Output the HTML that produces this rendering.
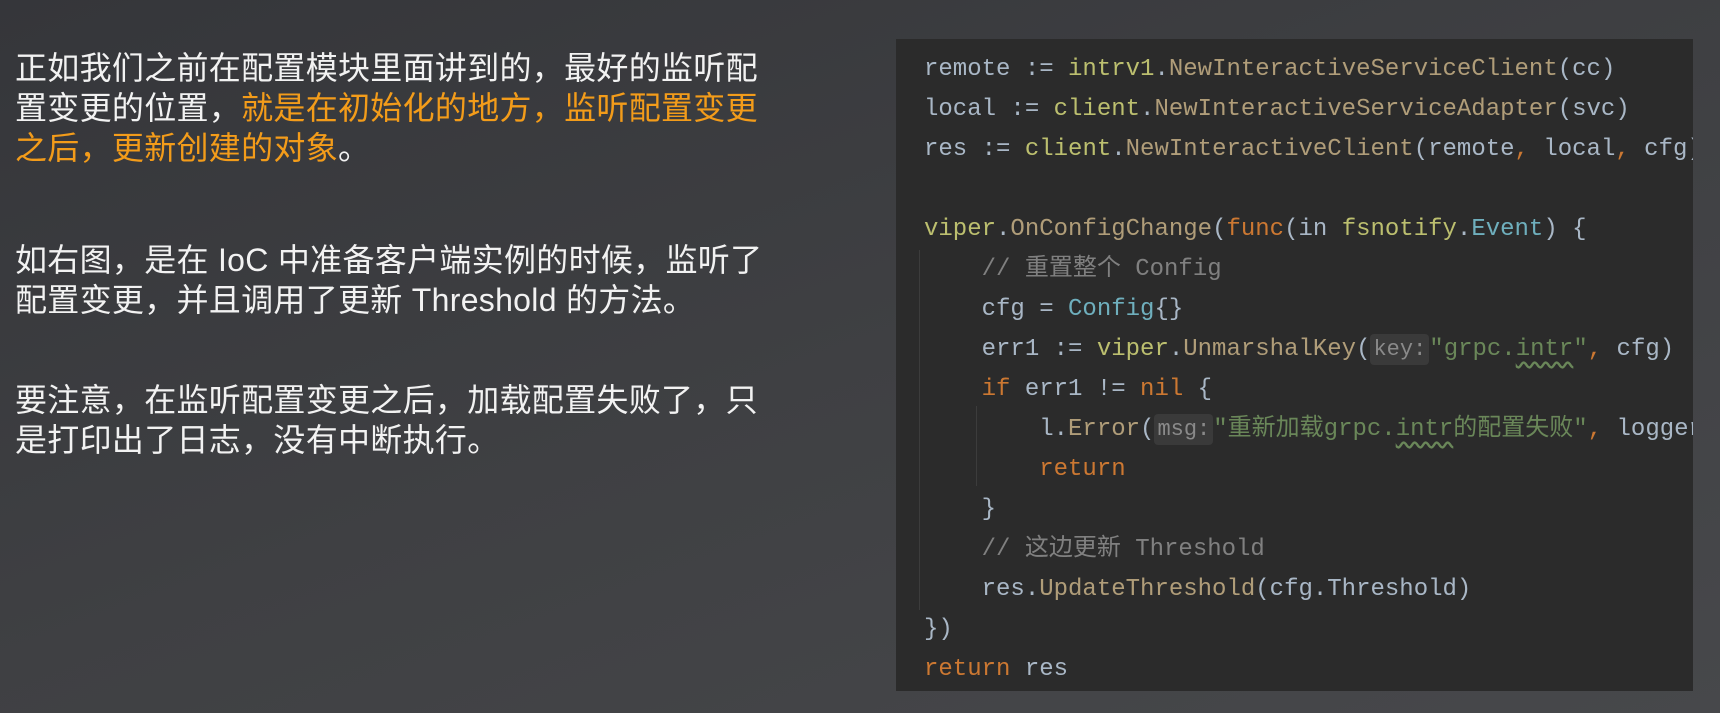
<!DOCTYPE html>
<html><head><meta charset="utf-8"><style>
*{margin:0;padding:0;box-sizing:border-box}
body{width:1720px;height:713px;overflow:hidden;background:linear-gradient(160deg,#35363a 0%,#3f4043 50%,#47484b 100%);position:relative;font-family:"Liberation Sans","Noto Sans CJK SC",sans-serif}
.t{position:absolute;left:15px;color:#f2f2f2;font-size:32px;line-height:40px;white-space:nowrap;letter-spacing:0.3px}
.o{color:#f39c1a}
.code{position:absolute;left:896px;top:39px;width:797px;height:652px;background:#2b2b2b;overflow:hidden}
.code pre{position:absolute;left:28px;top:11px;font-family:"Liberation Mono","Noto Sans CJK SC",monospace;font-size:24px;line-height:40px;color:#a9b7c6;white-space:pre}
.p{color:#bcbf6f}.f{color:#b09d79}.k{color:#cc7832}.s{color:#6a8759}.c{color:#808080}.ty{color:#6fafbd}
.h{background:#3a3a3a;color:#8a8a8a;border-radius:4px;padding:3px 3px;font-size:22px}
.w{text-decoration:underline wavy #6a8759;text-underline-offset:6px}
.g{position:absolute;width:1px;background:#3c3c3c}
</style></head><body>
<div class="t" style="top:48px">正如我们之前在配置模块里面讲到的，最好的监听配</div>
<div class="t" style="top:88px">置变更的位置，<span class="o">就是在初始化的地方，监听配置变更</span></div>
<div class="t o" style="top:128px">之后，更新创建的对象<span style="color:#f2f2f2">。</span></div>
<div class="t" style="top:240px">如右图，是在 IoC 中准备客户端实例的时候，监听了</div>
<div class="t" style="top:280px">配置变更，并且调用了更新 Threshold 的方法。</div>
<div class="t" style="top:380px">要注意，在监听配置变更之后，加载配置失败了，只</div>
<div class="t" style="top:420px">是打印出了日志，没有中断执行。</div>
<div class="code">
<div class="g" style="left:23px;top:211px;height:360px"></div>
<div class="g" style="left:80px;top:367px;height:80px"></div>
<pre>remote := <span class="p">intrv1</span>.<span class="f">NewInteractiveServiceClient</span>(cc)
local := <span class="p">client</span>.<span class="f">NewInteractiveServiceAdapter</span>(svc)
res := <span class="p">client</span>.<span class="f">NewInteractiveClient</span>(remote<span class="k">,</span> local<span class="k">,</span> cfg)

<span class="p">viper</span>.<span class="f">OnConfigChange</span>(<span class="k">func</span>(in <span class="p">fsnotify</span>.<span class="ty">Event</span>) {
    <span class="c">// 重置整个 Config</span>
    cfg = <span class="ty">Config</span>{}
    err1 := <span class="p">viper</span>.<span class="f">UnmarshalKey</span>(<span class="h">key:</span><span class="s">"grpc.<span class="w">intr</span>"</span><span class="k">,</span> cfg)
    <span class="k">if</span> err1 != <span class="k">nil</span> {
        l.<span class="f">Error</span>(<span class="h">msg:</span><span class="s">"重新加载grpc.<span class="w">intr</span>的配置失败"</span><span class="k">,</span> logger.Error(err1))
        <span class="k">return</span>
    }
    <span class="c">// 这边更新 Threshold</span>
    res.<span class="f">UpdateThreshold</span>(cfg.Threshold)
})
<span class="k">return</span> res</pre>
</div>
</body></html>
